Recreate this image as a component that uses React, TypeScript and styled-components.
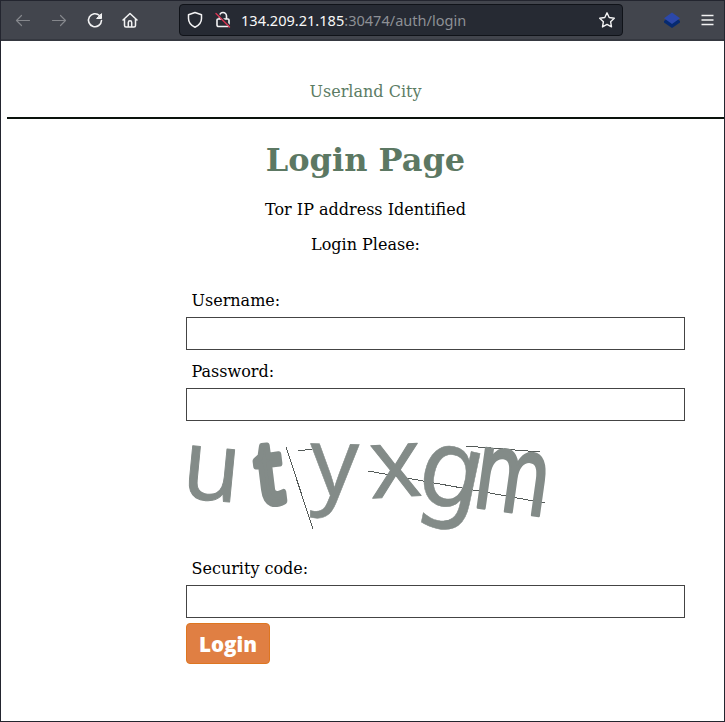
import React from "react";
import styled, { createGlobalStyle } from "styled-components";

const GlobalStyle = createGlobalStyle`
  * { box-sizing: border-box; }
  body { margin: 0; background: #fff; }
`;

const Window = styled.div`
  width: 725px;
  height: 722px;
  border: 1px solid #23252f;
  background: #fff;
  overflow: hidden;
  font-family: "DejaVu Serif", serif;
  font-size: 16px;
  color: #000;
`;

const Toolbar = styled.header`
  display: flex;
  align-items: center;
  height: 40px;
  padding: 0 9px 0 13px;
  background: #42454d;
  border-bottom: 2px solid #353840;
`;

const ToolButton = styled.span<{ $gap: number; $dim?: boolean }>`
  display: flex;
  flex: none;
  margin-right: ${(p) => p.$gap}px;
  color: ${(p) => (p.$dim ? "#85878c" : "#f3f3f4")};
`;

const AddressBar = styled.div`
  display: flex;
  align-items: center;
  width: 444px;
  height: 32px;
  margin-right: 40px;
  padding: 0 7px;
  background: #262a33;
  border: 1px solid #101319;
  border-radius: 4px;
`;

const Url = styled.div`
  flex: 1;
  margin-left: 9px;
  font: 14.55px/20px "Noto Sans", sans-serif;
  white-space: nowrap;
  color: #8d9095;
`;

const Host = styled.span`
  color: #f8f8f8;
`;

const Page = styled.main`
  padding-left: 6px;
`;

const SiteHeader = styled.div`
  height: 78px;
  padding-top: 41px;
  border-bottom: 2px solid #0a120c;
  text-align: center;
  line-height: 19px;
  color: #5c7c64;
`;

const Title = styled.h1`
  margin: 22px 0 0;
  font-size: 32px;
  line-height: 38px;
  text-align: center;
  color: #5c7863;
`;

const Notice = styled.p<{ $top: number }>`
  margin: ${(p) => p.$top}px 0 0;
  line-height: 19px;
  text-align: center;
`;

const Form = styled.form`
  display: flex;
  flex-direction: column;
  align-items: flex-start;
  width: 500px;
  margin: 37px 0 0 178.5px;
`;

const Label = styled.label<{ $top?: number }>`
  margin: ${(p) => p.$top ?? 0}px 0 7px 6px;
  line-height: 19px;
`;

const Input = styled.input`
  width: 499px;
  height: 33px;
  margin-left: 0.5px;
  padding: 0 8px;
  border: 1px solid #444;
  background: #fff;
  font: inherit;
  outline: 0;
`;

const Captcha = styled.svg`
  display: block;
  margin: 10px 0 0 -0.5px;
  fill: #838b88;
  overflow: visible;
`;

const LoginButton = styled.button`
  width: 84px;
  height: 41px;
  margin: 5px 0 0 0.5px;
  padding: 0;
  border: 1px solid #de7620;
  border-radius: 4px;
  background: #e07f43;
  color: #fff;
  font: 800 20.6px/30px "Open Sans", sans-serif;
`;

const line = { fill: "none", stroke: "currentColor", strokeLinecap: "round", strokeLinejoin: "round" } as const;

const Arrow = ({ flip }: { flip?: boolean }) => (
  <svg width="18" height="18" viewBox="0 0 18 18" {...line} strokeWidth="1.2">
    <path d={flip ? "M2.5 9.5h13M10.5 4.5l5 5-5 5" : "M15.5 9.5h-13M7.5 4.5l-5 5 5 5"} />
  </svg>
);

const Reload = () => (
  <svg width="18" height="18" viewBox="0 0 18 18" {...line} strokeWidth="1.6">
    <path d="M15.5 9.5a6.5 6.5 0 1 1-2-5" />
    <path d="M15.5 3v4.5H11z" fill="currentColor" strokeWidth="1" />
  </svg>
);

const Home = () => (
  <svg width="18" height="18" viewBox="0 0 18 18" {...line} strokeWidth="1.5">
    <path d="M2 9l7-6.5L16 9M3.5 8v6.5a1.5 1.5 0 0 0 1.5 1.5h8a1.5 1.5 0 0 0 1.5-1.5V8M7.3 16v-4.5a1.7 1.7 0 0 1 3.4 0V16" />
  </svg>
);

const Shield = () => (
  <svg width="16" height="18" viewBox="0 0 16 18" {...line} strokeWidth="1.5">
    <path d="M8 1.5l6.5 2.3v3.7c0 4-2.7 7-6.5 8.8C4.2 14.5 1.5 11.5 1.5 7.5V3.8z" />
  </svg>
);

const InsecureLock = () => (
  <svg width="18" height="18" viewBox="0 0 18 18" {...line} strokeWidth="1.6">
    <path d="M5.5 8V5a3.5 3.5 0 0 1 7 0v3M4 8h10a1 1 0 0 1 1 1v5a1.5 1.5 0 0 1-1.5 1.5h-9A1.5 1.5 0 0 1 3 14V9a1 1 0 0 1 1-1z" />
    <path d="M3 2l13.500 13.500" stroke="#262a33" strokeWidth="1.5" />
    <path d="M2 2.500l13.500 13.500" stroke="#d93553" strokeWidth="1.4" />
  </svg>
);

const Star = () => (
  <svg width="18" height="18" viewBox="0 0 18 18" {...line} strokeWidth="1.4">
    <path d="M9 1.8l2.2 4.7 5.1.7-3.7 3.5.9 5.2L9 13.4l-4.500 2.500.9-5.200-3.700-3.500 5.100-.7z" />
  </svg>
);

const Layers = () => (
  <svg width="18" height="18" viewBox="0 0 18 18">
    <path d="M1 10l2-1.5h12l2 1.5v1.500L9 17l-8-5.500z" fill="#062a70" />
    <path d="M9 1.500l8 5.700-8 5.800-8-5.800z" fill="#2c48aa" />
  </svg>
);

const Menu = () => (
  <svg width="13" height="13" viewBox="0 0 13 13" stroke="currentColor" strokeWidth="1.3">
    <path d="M.5 1.500h12M.5 6h12M.5 10.500h12" />
  </svg>
);

type Glyph = {
  char: string;
  x: number;
  y: number;
  angle: number;
  size: number;
  font: string;
  sx?: number;
  weight?: number;
  outline?: number;
};

const glyphs: Glyph[] = [
  { char: "u", x: 24, y: 69, angle: 5.5, size: 98, font: "Open Sans", sx: 0.96, outline: 1 },
  { char: "t", x: 88, y: 72, angle: -7, size: 87, font: "Noto Sans", weight: 600, outline: 7, sx: 0.78 },
  { char: "y", x: 149, y: 64.5, angle: 1, size: 96, font: "Noto Sans", outline: 0.5 },
  { char: "x", x: 212, y: 66, angle: -3, size: 98, font: "Open Sans", sx: 1.02, outline: 1 },
  { char: "g", x: 260, y: 76, angle: 12, size: 109, font: "DejaVu Sans", sx: 0.94, outline: 0.5 },
  { char: "m", x: 323, y: 80.5, angle: 8, size: 109, font: "DejaVu Sans", sx: 0.71, outline: 3 },
];

export default function App() {
  return (
    <>
      <GlobalStyle />
      <Window>
        <Toolbar>
          <ToolButton $gap={18} $dim><Arrow /></ToolButton>
          <ToolButton $gap={18} $dim><Arrow flip /></ToolButton>
          <ToolButton $gap={17}><Reload /></ToolButton>
          <ToolButton $gap={40}><Home /></ToolButton>
          <AddressBar>
            <ToolButton $gap={11}><Shield /></ToolButton>
            <ToolButton $gap={0}><InsecureLock /></ToolButton>
            <Url><Host>134.209.21.185</Host>:30474/auth/login</Url>
            <ToolButton $gap={-1}><Star /></ToolButton>
          </AddressBar>
          <ToolButton $gap={20}><Layers /></ToolButton>
          <ToolButton $gap={0}><Menu /></ToolButton>
        </Toolbar>
        <Page>
          <SiteHeader>Userland City</SiteHeader>
          <Title>Login Page</Title>
          <Notice $top={21}>Tor IP address Identified</Notice>
          <Notice $top={16}>Login Please:</Notice>
          <Form onSubmit={(e) => e.preventDefault()}>
            <Label htmlFor="username">Username:</Label>
            <Input id="username" />
            <Label htmlFor="password" $top={12}>Password:</Label>
            <Input id="password" type="password" />
            <Captcha width="361" height="128" viewBox="0 0 361 128">
              <path
                d="M101 16l27 82M113 20l14-2M183 40l177 32M281 15l74 6"
                stroke="#555b59"
                strokeWidth="1"
                shapeRendering="crispEdges"
              />
              {glyphs.map((g) => (
                <text
                  key={g.char}
                  transform={`translate(${g.x} ${g.y}) rotate(${g.angle}) scale(${g.sx ?? 1} 1)`}
                  fontFamily={`"${g.font}", sans-serif`}
                  fontSize={g.size}
                  fontWeight={g.weight ?? 400}
                  textAnchor="middle"
                  stroke="#838b88"
                  strokeWidth={g.outline}
                  strokeLinejoin="round"
                >
                  {g.char}
                </text>
              ))}
            </Captcha>
            <Label htmlFor="code">Security code:</Label>
            <Input id="code" />
            <LoginButton type="submit">Login</LoginButton>
          </Form>
        </Page>
      </Window>
    </>
  );
}
